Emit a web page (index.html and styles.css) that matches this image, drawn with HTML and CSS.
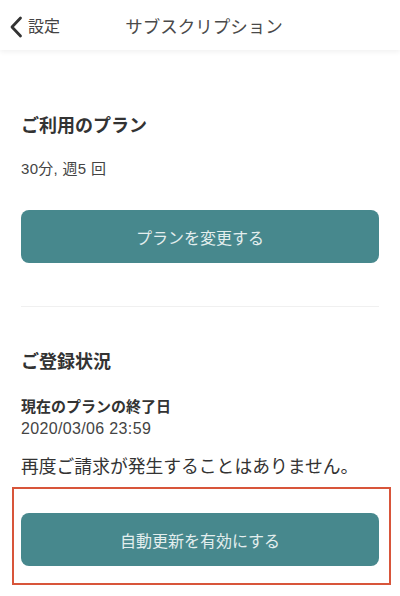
FILE: index.html
```html
<!DOCTYPE html>
<html lang="ja">
<head>
<meta charset="utf-8">
<link rel="stylesheet" href="styles.css">
</head>
<body>
<header class="nav">
  <div class="back">
    <svg class="chev" width="14" height="22" viewBox="0 0 14 22"><path d="M11.5 2 L3 11 L11.5 20" fill="none" stroke="#333" stroke-width="2.8" stroke-linecap="round" stroke-linejoin="round"/></svg>
    <span class="back-label">設定</span>
  </div>
  <div class="title">サブスクリプション</div>
</header>
<main class="content">
  <h2 class="heading first">ご利用のプラン</h2>
  <p class="plan">30分, 週5 回</p>
  <button class="btn btn-first">プランを変更する</button>
  <hr class="divider">
  <h2 class="heading second">ご登録状況</h2>
  <p class="label">現在のプランの終了日</p>
  <p class="date">2020/03/06 23:59</p>
  <p class="note">再度ご請求が発生することはありません。</p>
  <div class="highlight">
    <button class="btn">自動更新を有効にする</button>
  </div>
</main>
</body>
</html>
```
FILE: styles.css
```css
* { box-sizing: border-box; }
html, body { margin: 0; padding: 0; background: #fff; }
body {
  width: 400px;
  height: 596px;
  overflow: hidden;
  font-family: "Liberation Sans", "Noto Sans CJK JP", sans-serif;
  color: #333;
}
.nav {
  position: relative;
  height: 50px;
  display: flex;
  align-items: center;
  justify-content: center;
  padding: 4px 0 0 8px;
  box-shadow: 0 2px 5px rgba(0,0,0,0.06);
  background: #fff;
}
.back {
  position: absolute;
  left: 9px;
  top: 0;
  height: 50px;
  padding-top: 4px;
  display: flex;
  align-items: center;
  gap: 5px;
}
.chev { display: block; margin-top: -1px; }
.back-label { font-size: 16px; color: #444; line-height: 20px; }
.title { font-size: 17.5px; color: #4a4a4a; line-height: 22px; }
.content { padding: 0 21px; }
.heading {
  margin: 0;
  font-size: 18px;
  font-weight: 700;
  line-height: 26px;
  color: #333;
}
.heading.first { margin-top: 63px; }
.heading.second { margin-top: 42px; }
.plan { margin: 20px 0 0; font-size: 15px; line-height: 20px; color: #444; letter-spacing: 0.3px; }
.btn {
  display: block;
  width: 100%;
  height: 53px;
  border: none;
  border-radius: 8px;
  background: #47888d;
  color: #e3eeee;
  font-family: inherit;
  font-size: 16px;
  padding: 0;
}
.btn-first { margin-top: 31px; }
.divider { margin: 43px 0 0; border: none; height: 1px; background: #f0f0f0; }
.label { margin: 22px 0 0; font-size: 15px; font-weight: 700; line-height: 20px; color: #333; }
.date { margin: 2px 0 0; font-size: 16px; line-height: 20px; color: #444; letter-spacing: 0.35px; }
.note { margin: 16px 0 0; font-size: 17.8px; line-height: 24px; color: #333; }
.highlight {
  margin: 8px -12px 0 -9px;
  border: 2px solid #d8553a;
  padding: 24px 10px 17px 7px;
}
```
